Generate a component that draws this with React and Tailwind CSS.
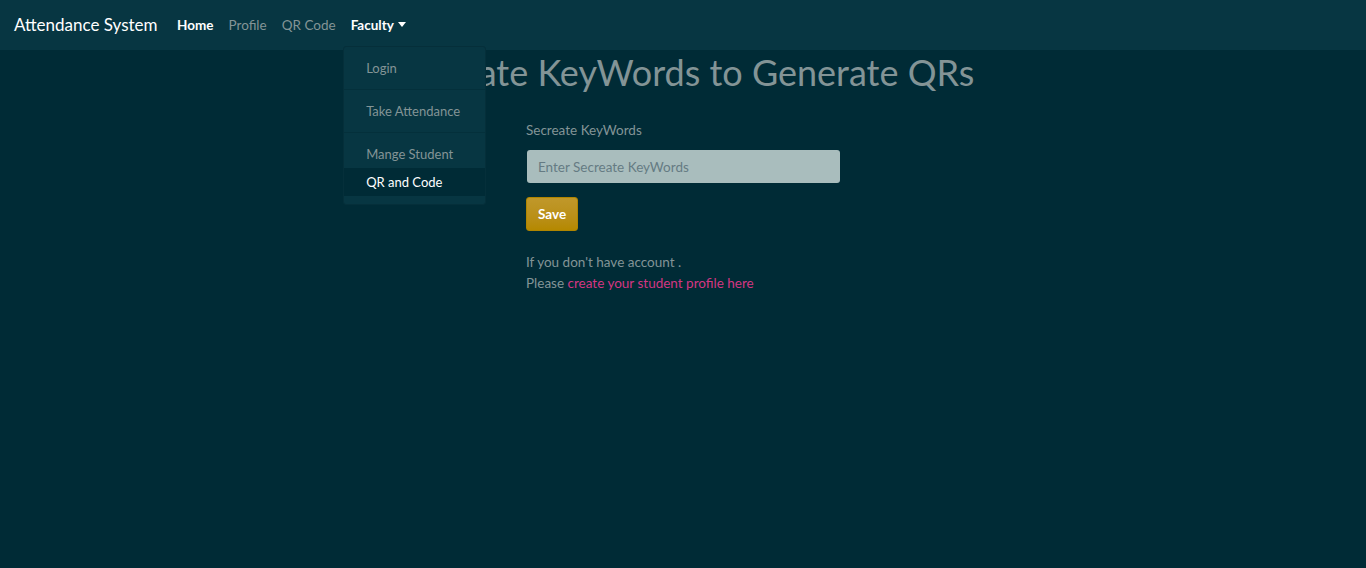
import React from 'react';

const font = { fontFamily: '"Source Sans Pro", Lato, "Noto Sans", sans-serif' };

const NavLink = ({ children, active }) => (
    <a className={`px-[7.5px] text-[13.5px] ${active ? 'text-white font-bold' : 'text-[#839496]'}`} href="#">
        {children}
    </a>
);

const Item = ({ children, active }) => (
    <a
        className={`block whitespace-nowrap px-[22px] h-[28px] leading-[28px] text-[13px] ${active ? 'text-white bg-[#002b36]' : 'text-[#839496]'}`}
        href="#"
    >
        {children}
    </a>
);

const Dropdown = () => (
    <div className="absolute left-0 top-[46px] w-[143px] bg-[#073642] border border-[#052f3a] rounded-[3px] pt-[7px] pb-[8px] z-10">
        <Item>Login</Item>
        <div className="my-[7px] border-t border-[#04303b]"></div>
        <Item>Take Attendance</Item>
        <div className="my-[7px] border-t border-[#04303b]"></div>
        <Item>Mange Student</Item>
        <Item active>QR and Code</Item>
    </div>
);

export default function App() {
    return (
        <div className="min-h-[568px] bg-[#002b36]" style={font}>
            <nav className="h-[50px] bg-[#073642] flex items-center px-[14px]">
                <span className="text-[17px] text-white mr-[12px]">Attendance System</span>
                <div className="flex items-center h-full">
                    <NavLink active>Home</NavLink>
                    <NavLink>Profile</NavLink>
                    <NavLink>QR Code</NavLink>
                    <div className="relative h-full flex items-center pl-[7.5px]">
                        <a className="text-[13.5px] text-white font-bold flex items-center gap-[4px]" href="#">
                            Faculty
                            <span className="inline-block w-0 h-0 border-l-[4px] border-r-[4px] border-t-[5px] border-l-transparent border-r-transparent border-t-white mt-[-2px]"></span>
                        </a>
                        <Dropdown />
                    </div>
                </div>
            </nav>

            <h1 className="text-center text-[36px] text-[#839496] leading-[44px]">Secreate KeyWords to Generate QRs</h1>

            <div className="w-[314px] ml-[526px] mt-[26px]">
                <label className="block text-[13.5px] text-[#839496] leading-[20px]">Secreate KeyWords</label>
                <input
                    className="mt-[10px] w-[313px] ml-[1px] h-[33px] rounded-[3px] bg-[#a9bdbd] px-[11px] text-[13.5px] placeholder-[#657b83] outline-none"
                    placeholder="Enter Secreate KeyWords"
                />
                <button className="mt-[14px] h-[34px] px-[11px] rounded-[3px] text-white text-[13.5px] font-bold bg-gradient-to-b from-[#c0982a] to-[#b58900] border border-[#b08500]">Save</button>
                <div className="mt-[21px] text-[13.5px] leading-[21px] text-[#839496]">
                    <p>If you don't have account .</p>
                    <p>Please <a className="text-[#d33682]" href="#">create your student profile here</a></p>
                </div>
            </div>
        </div>
    );
}
